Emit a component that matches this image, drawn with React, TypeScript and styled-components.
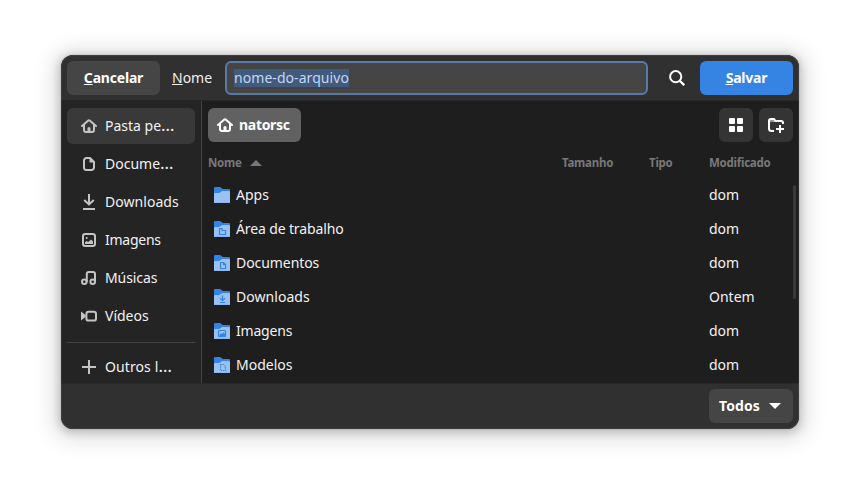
import React from 'react';
import styled, { createGlobalStyle, css } from 'styled-components';

const GlobalStyle = createGlobalStyle`
  *, *::before, *::after { box-sizing: border-box; }
  body {
    margin: 0;
    background: #fff;
    font-family: 'Noto Sans', sans-serif;
    font-size: 14px;
    line-height: 20px;
    color: #fff;
  }
  button { font: inherit; color: inherit; border: 0; padding: 0; }
  svg { display: block; flex: none; }
`;

const Page = styled.main`
  height: 496px;
  padding: 55px 61px 67px;
`;

const Dialog = styled.section`
  position: relative;
  display: flex;
  flex-direction: column;
  width: 738px;
  height: 374px;
  border-radius: 12px;
  overflow: hidden;
  background: #1e1e1e;
`;

const Shadow = styled.div`
  width: 738px;
  border-radius: 12px;
  box-shadow: 0 2px 8px 2px rgba(0, 0, 0, 0.19), 0 3px 20px 10px rgba(0, 0, 0, 0.1),
    0 0 0 1px rgba(0, 0, 0, 0.05);
`;

const Outline = styled.div`
  position: absolute;
  inset: 0;
  border-radius: 12px;
  box-shadow: inset 0 0 0 1px rgba(255, 255, 255, 0.07);
  pointer-events: none;
`;

const Header = styled.header`
  display: flex;
  align-items: center;
  height: 46px;
  padding: 0 6px;
  background: #303030;
  box-shadow: inset 0 -1px #262626;
`;

const Button = styled.button<{ $primary?: boolean }>`
  width: 93px;
  height: 34px;
  border-radius: 6px;
  font-weight: 700;
  background: ${(p) => (p.$primary ? '#3584e4' : '#454545')};
`;

const Label = styled.span<{ $spacing?: number; $bold?: boolean }>`
  white-space: nowrap;
  letter-spacing: ${(p) => p.$spacing ?? 0}px;
  font-weight: ${(p) => (p.$bold ? 700 : 400)};
`;

const Ellipsis = styled.span`
  font-size: 17px;
  line-height: 1;
`;

const Mnemonic = styled.span`
  text-decoration: underline;
  text-decoration-thickness: 1px;
  text-underline-offset: 1px;
  text-decoration-skip-ink: none;
`;

const FieldLabel = styled.label`
  width: 65px;
  padding-left: 12px;
  color: #eee;
`;

const Entry = styled.div`
  display: flex;
  align-items: center;
  width: 423px;
  height: 34px;
  padding-left: 7px;
  border: 2px solid #5a7aa5;
  border-radius: 6px;
  background: #454545;
`;

const Selection = styled.span`
  display: block;
  height: 18px;
  line-height: 18px;
  width: 115px;
  white-space: nowrap;
  letter-spacing: 0.06px;
  color: #c3d8f2;
  background: #415a7d;
`;

const SearchButton = styled.button`
  display: grid;
  place-items: center;
  width: 34px;
  height: 34px;
  margin: 0 6px 0 12px;
  background: transparent;
`;

const Body = styled.div`
  display: flex;
  height: 282px;
`;

const Sidebar = styled.nav`
  display: flex;
  flex-direction: column;
  gap: 2px;
  width: 141px;
  padding: 7px 6px 0;
  border-right: 1px solid #444;
  background: #242424;
  overflow: hidden;
`;

const Place = styled.div<{ $selected?: boolean }>`
  display: flex;
  align-items: center;
  flex: none;
  gap: 8px;
  height: 36px;
  padding-left: 14px;
  border-radius: 6px;
  color: #f2f2f2;
  ${(p) => p.$selected && css`background: #393939;`}
  svg { color: #c4c4c4; }
`;

const Separator = styled.hr`
  flex: none;
  width: 100%;
  height: 1px;
  margin: 6px 0 4px;
  border: 0;
  background: #444;
`;

const Content = styled.div`
  position: relative;
  flex: 1;
  padding: 7px 6px 0;
`;

const PathBar = styled.div`
  display: flex;
  gap: 6px;
  height: 34px;
`;

const PathButton = styled.button`
  display: flex;
  align-items: center;
  gap: 6px;
  width: 93px;
  margin-right: auto;
  padding-left: 9px;
  border-radius: 6px;
  background: #616161;
`;

const IconButton = styled.button`
  display: grid;
  place-items: center;
  width: 34px;
  border-radius: 6px;
  background: #343434;
`;

const columns = css`
  display: grid;
  grid-template-columns: 354px 87px 60px 84px;
  align-items: center;
`;

const TableHead = styled.div`
  ${columns}
  height: 36px;
  padding-top: 6px;
  color: #787878;
  font-size: 11.5px;
  font-weight: 700;
  letter-spacing: -0.25px;
`;

const SortCell = styled.div`
  display: flex;
  align-items: center;
  gap: 8px;
`;

const FileRow = styled.div`
  ${columns}
  height: 34px;
  color: #f2f2f2;
`;

const FileName = styled.div`
  display: flex;
  align-items: center;
  gap: 6px;
  padding-left: 6px;
`;

const Modified = styled.span`
  grid-column: 4;
`;

const ScrollThumb = styled.div`
  position: absolute;
  top: 84px;
  right: 3px;
  width: 3px;
  height: 114px;
  border-radius: 2px;
  background: #393939;
`;

const Footer = styled.footer`
  display: flex;
  align-items: center;
  justify-content: flex-end;
  height: 46px;
  padding: 0 6px;
  background: #303030;
  box-shadow: inset 0 1px #292929;
`;

const FilterButton = styled.button`
  display: flex;
  align-items: center;
  gap: 9px;
  width: 84px;
  height: 34px;
  padding-left: 10px;
  border-radius: 6px;
  background: #454545;
`;

type IconName = 'home' | 'doc' | 'download' | 'image' | 'music' | 'video' | 'plus' | 'search' | 'grid' | 'newFolder';

const shapes: Record<IconName, React.ReactNode> = {
  home: (
    <>
      <path d="M1 8 7.3 2.5q.7-.6 1.4 0L15 8M3 7v5a2 2 0 0 0 2 2h6a2 2 0 0 0 2-2V7" strokeLinecap="round" strokeLinejoin="round" />
      <path d="M6.5 14v-3.5a1.5 1.5 0 0 1 3 0V14z" fill="currentColor" stroke="none" />
    </>
  ),
  doc: (
    <>
      <path d="M5.5 2H9l4 4v5.5a2.5 2.5 0 0 1-2.5 2.5h-5A2.5 2.5 0 0 1 3 11.5v-7A2.5 2.5 0 0 1 5.5 2z" />
      <path d="M8.5 2v4.5H13z" fill="currentColor" stroke="none" />
    </>
  ),
  download: <path d="M8 0v10.5M3.2 6 8 10.5 12.8 6M2 15h12" />,
  image: (
    <>
      <rect x="2" y="2" width="12" height="12" rx="2.3" />
      <path d="M4 12v-1.7L5.7 9l1.5 1L10 7.5l2 2V12z" fill="currentColor" stroke="none" />
      <circle cx="5.7" cy="5.9" r="1" fill="currentColor" stroke="none" />
    </>
  ),
  music: (
    <>
      <circle cx="3.3" cy="11.7" r="2.3" />
      <circle cx="11.7" cy="11.7" r="2.3" />
      <path d="M5.8 12V4a2 2 0 0 1 2-2H12a2 2 0 0 1 2 2v8" />
    </>
  ),
  video: (
    <>
      <rect x="5.4" y="3.8" width="9.6" height="8.8" rx="2.2" />
      <path d="M0 3.5v9L4.5 9V7z" fill="currentColor" stroke="none" />
    </>
  ),
  plus: <path d="M8 1v14M1 8h14" />,
  search: (
    <>
      <circle cx="6.7" cy="6.7" r="5.6" />
      <path d="m10.7 10.7 4.5 4.5" strokeWidth="2.3" />
    </>
  ),
  grid: (
    <g fill="currentColor" stroke="none">
      <rect x="1" y="1" width="6" height="6" rx="1" />
      <rect x="9" y="1" width="6" height="6" rx="1" />
      <rect x="1" y="9" width="6" height="6" rx="1" />
      <rect x="9" y="9" width="6" height="6" rx="1" />
    </g>
  ),
  newFolder: (
    <>
      <path d="M6 14H3.5A2.5 2.5 0 0 1 1 11.500V4a2 2 0 0 1 2-2h3l1.500 2H13a2 2 0 0 1 2 2v1M12 8v8M8 12h8" />
      <path d="M1 4h7" strokeWidth="1" />
    </>
  ),
};

const Icon = ({ name }: { name: IconName }) => (
  <svg width="16" height="16" viewBox="0 0 16 16" fill="none" stroke="currentColor" strokeWidth="2">
    {shapes[name]}
  </svg>
);

type Emblem = 'desktop' | 'doc' | 'download' | 'image' | 'template';

const emblems: Record<Emblem, React.ReactNode> = {
  desktop: <path d="M5.500 7.500h2.500v2h3.500v4h-6z" />,
  doc: (
    <>
      <path d="M6.500 7.500h3l2 2v4h-5z" />
      <path d="M9 7v3h3z" fill="#3584e4" stroke="none" />
    </>
  ),
  download: <path d="M8.500 6.500v5M6 9.200l2.500 2.300L11 9.200M6 13.500h5" />,
  image: (
    <>
      <rect x="4.500" y="7.500" width="7" height="6" rx="1" />
      <path d="M5.500 13v-1.500L7 10.300l1 .8L9.600 9.500l1.400 1.500v2z" fill="#3584e4" stroke="none" />
    </>
  ),
  template: <path d="M6.500 7.500h3l2 2v4h-5z" strokeDasharray="1.200 1" />,
};

const Folder = ({ emblem }: { emblem?: Emblem }) => (
  <svg width="16" height="16" viewBox="0 0 16 16">
    <path d="M0 1q0-1 1-1h4.500q1 0 1.700.8T9 2h6q1 0 1 1v8H0z" fill="#3584e4" />
    <path d="M0 7q0-1 1-1h3.800q.9 0 1.500-.7l.8-.6Q7.700 4 8.600 4H15q1 0 1 1v11H0z" fill="#99c1f1" />
    <path d="M0 15.500h16" stroke="#8cb6ec" />
    {emblem && <g fill="none" stroke="#3584e4" strokeWidth="1.200">{emblems[emblem]}</g>}
  </svg>
);

const places: { icon: IconName; label: string; cut?: boolean; spacing?: number }[] = [
  { icon: 'home', label: 'Pasta pe', cut: true },
  { icon: 'doc', label: 'Docume', cut: true },
  { icon: 'download', label: 'Downloads', spacing: 0.05 },
  { icon: 'image', label: 'Imagens', spacing: -0.25 },
  { icon: 'music', label: 'Músicas', spacing: -0.1 },
  { icon: 'video', label: 'Vídeos' },
];

const files: { name: string; emblem?: Emblem; modified: string; spacing?: number }[] = [
  { name: 'Apps', modified: 'dom' },
  { name: 'Área de trabalho', emblem: 'desktop', modified: 'dom', spacing: -0.13 },
  { name: 'Documentos', emblem: 'doc', modified: 'dom', spacing: -0.07 },
  { name: 'Downloads', emblem: 'download', modified: 'Ontem', spacing: 0.05 },
  { name: 'Imagens', emblem: 'image', modified: 'dom', spacing: -0.2 },
  { name: 'Modelos', emblem: 'template', modified: 'dom' },
];

export default function App() {
  return (
    <>
      <GlobalStyle />
      <Page>
        <Shadow>
          <Dialog>
            <Header>
              <Button><Label $bold $spacing={-0.2}><Mnemonic>C</Mnemonic>ancelar</Label></Button>
              <FieldLabel><Label><Mnemonic>N</Mnemonic>ome</Label></FieldLabel>
              <Entry><Selection>nome-do-arquivo</Selection></Entry>
              <SearchButton aria-label="Pesquisar"><Icon name="search" /></SearchButton>
              <Button $primary><Label $bold $spacing={-0.2}><Mnemonic>S</Mnemonic>alvar</Label></Button>
            </Header>
            <Body>
              <Sidebar>
                {places.map((p, i) => (
                  <Place key={p.label} $selected={i === 0}>
                    <Icon name={p.icon} />
                    <Label $spacing={p.spacing}>{p.label}{p.cut && <Ellipsis>…</Ellipsis>}</Label>
                  </Place>
                ))}
                <Separator />
                <Place><Icon name="plus" /><Label $spacing={0.1}>Outros l<Ellipsis>…</Ellipsis></Label></Place>
              </Sidebar>
              <Content>
                <PathBar>
                  <PathButton><Icon name="home" /><Label $bold $spacing={-0.3}>natorsc</Label></PathButton>
                  <IconButton aria-label="Grade"><Icon name="grid" /></IconButton>
                  <IconButton aria-label="Criar pasta"><Icon name="newFolder" /></IconButton>
                </PathBar>
                <TableHead>
                  <SortCell>
                    Nome
                    <svg width="12" height="6" viewBox="0 0 12 6"><path d="M0 6 6 0l6 6z" fill="currentColor" /></svg>
                  </SortCell>
                  <span>Tamanho</span>
                  <span>Tipo</span>
                  <span>Modificado</span>
                </TableHead>
                {files.map((f) => (
                  <FileRow key={f.name}>
                    <FileName>
                      <Folder emblem={f.emblem} />
                      <Label $spacing={f.spacing}>{f.name}</Label>
                    </FileName>
                    <Modified>{f.modified}</Modified>
                  </FileRow>
                ))}
                <ScrollThumb />
              </Content>
            </Body>
            <Footer>
              <FilterButton>
                <Label $bold $spacing={0.1}>Todos</Label>
                <svg width="12" height="6" viewBox="0 0 12 6"><path d="M0 0h12L6 6z" fill="currentColor" /></svg>
              </FilterButton>
            </Footer>
            <Outline />
          </Dialog>
        </Shadow>
      </Page>
    </>
  );
}
